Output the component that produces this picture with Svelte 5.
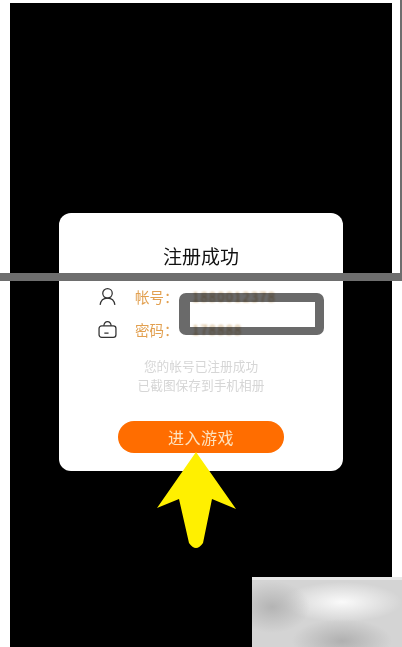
<script>
  const rows = [
    { label: "帐号", value: "1880012378", icon: "user" },
    { label: "密码", value: "178888", icon: "bag" }
  ];
</script>

<style>
  :global(body) {
    margin: 0;
    background: #fff;
  }

  .page {
    position: relative;
    width: 402px;
    height: 647px;
    overflow: hidden;
    box-sizing: border-box;
    padding: 3px 10px 0 10px;
    font-family: "Noto Sans CJK SC", "Liberation Sans", sans-serif;
  }

  .screen {
    height: 644px;
    background: #000;
    display: flex;
    justify-content: center;
    padding-top: 210px;
    box-sizing: border-box;
  }

  .card {
    width: 284px;
    height: 258px;
    background: #fff;
    border-radius: 12px;
    box-sizing: border-box;
    padding-top: 29px;
    display: flex;
    flex-direction: column;
    align-items: center;
  }

  h1 {
    margin: 0;
    font-size: 19px;
    line-height: 28px;
    font-weight: 400;
    color: #111;
    filter: blur(0.3px);
  }

  .rows {
    align-self: stretch;
    margin-top: 14px;
    padding-left: 39px;
    display: flex;
    flex-direction: column;
    gap: 9px;
  }

  .row {
    display: flex;
    align-items: center;
    height: 24px;
  }

  .icon {
    width: 19px;
    height: 19px;
    flex: none;
    margin-right: 18px;
    filter: blur(0.3px);
  }

  .label {
    width: 57px;
    flex: none;
    font-size: 14.5px;
    color: #e2a050;
    white-space: nowrap;
    filter: blur(0.5px);
  }

  .value {
    font-size: 13px;
    letter-spacing: 1.2px;
    color: #c9a56f;
    filter: blur(0.8px);
  }

  .note {
    margin: 15px 0 0;
    font-size: 12.700px;
    line-height: 19px;
    color: #d6d6d6;
    text-align: center;
    filter: blur(0.6px);
  }

  .enter {
    margin-top: 27px;
    width: 166px;
    height: 32px;
    border: 0;
    padding: 0;
    border-radius: 16px;
    background: #ff6d00;
    color: #fde3bf;
    font-family: inherit;
    font-size: 16px;
    letter-spacing: 0.5px;
  }

  .line {
    position: absolute;
    left: 0;
    top: 273px;
    width: 402px;
    height: 8px;
    background: #6e6e6e;
  }

  .side {
    position: absolute;
    left: 400px;
    top: 0;
    width: 2px;
    height: 281px;
    background: #6e6e6e;
  }

  .mark {
    position: absolute;
    left: 179px;
    top: 293px;
    width: 145px;
    height: 42px;
    box-sizing: border-box;
    border: solid #6a6a6a;
    border-width: 9px 9px 8px 11px;
    border-radius: 7px;
    mix-blend-mode: multiply;
  }

  .arrow {
    position: absolute;
    left: 155px;
    top: 450px;
  }

  .patch {
    position: absolute;
    left: 252px;
    top: 577px;
    width: 150px;
    height: 70px;
    background:
      linear-gradient(#e8e8e8, #e8e8e8) top / 100% 3px no-repeat,
      radial-gradient(ellipse 38px 26px at 20px 30px, #b4b4b4, transparent),
      radial-gradient(ellipse 50px 22px at 90px 64px, #b0b0b0, transparent),
      radial-gradient(ellipse 60px 20px at 90px 25px, #fafafa, transparent),
      #d4d4d4;
  }
</style>

<div class="page">
  <div class="screen">
    <div class="card">
      <h1>注册成功</h1>
      <div class="rows">
        {#each rows as row}
          <div class="row">
            {#if row.icon === "user"}
              <svg class="icon" viewBox="0 0 18 18" fill="none" stroke="#333" stroke-width="1.2">
                <circle cx="9" cy="6" r="4.500" />
                <path d="M2 17c.5-3.800 3.200-6.500 7-6.500s6.500 2.700 7 6.500" />
              </svg>
            {:else}
              <svg class="icon" viewBox="0 0 18 18" fill="none" stroke="#333" stroke-width="1.2">
                <rect x="1" y="5.500" width="16" height="11" rx="2.500" />
                <path d="M5.500 5.500c.3-2.500 1.800-4 3.500-4s3.200 1.500 3.500 4M6 12.500h4" />
              </svg>
            {/if}
            <span class="label">{row.label}：</span>
            <span class="value">{row.value}</span>
          </div>
        {/each}
      </div>
      <p class="note">您的帐号已注册成功<br />已截图保存到手机相册</p>
      <button class="enter">进入游戏</button>
    </div>
  </div>

  <div class="line"></div>
  <div class="side"></div>
  <div class="mark"></div>
  <svg class="arrow" width="84" height="102" viewBox="0 0 84 102">
    <path d="M41 2 L81 59 L57 49 L48 93 Q41 103 34 93 L24 49 L2 58 Z" fill="#fff000" />
  </svg>
  <div class="patch"></div>
</div>
